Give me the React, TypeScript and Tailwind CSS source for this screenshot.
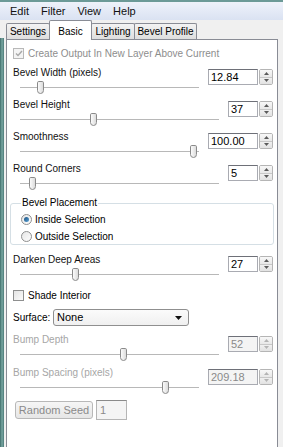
import React from 'react';

type Ctl = {
  label: string;
  value: string;
  wide?: boolean;
  pos: number;
  disabled?: boolean;
};

const Spinner: React.FC<{ disabled?: boolean }> = ({ disabled }) => {
  const c = disabled ? '#b4b4b4' : '#5a5a5a';
  return (
    <div className="ml-[1px] w-[14px] flex flex-col border border-[#b5b5b5] rounded-[2px] overflow-hidden">
      <div className="flex-1 flex items-center justify-center bg-gradient-to-b from-[#f8f8f8] to-[#e8e8e8] border-b border-[#c8c8c8]">
        <svg width="5" height="3" viewBox="0 0 5 3"><path d="M0 3 L2.5 0 L5 3 Z" fill={c} /></svg>
      </div>
      <div className="flex-1 flex items-center justify-center bg-gradient-to-b from-[#f0f0f0] to-[#e2e2e2]">
        <svg width="5" height="3" viewBox="0 0 5 3"><path d="M0 0 L2.5 3 L5 0 Z" fill={c} /></svg>
      </div>
    </div>
  );
};

const Slider: React.FC<{ pos: number }> = ({ pos }) => (
  <div className="relative mt-[2px] ml-[7px] h-[14px]">
    <div className="absolute inset-x-0 top-[6px] h-[2px] border-t border-[#b8b8b8] border-b border-b-white" />
    <div
      className="absolute top-0 w-[7px] h-[13px] rounded-b-[4px] rounded-t-[2px] border border-[#8a8a8a] bg-gradient-to-r from-[#fbfbfb] to-[#dcdcdc]"
      style={{ left: pos - 3 }}
    />
  </div>
);

const Control: React.FC<Ctl> = ({ label, value, wide, pos, disabled }) => (
  <div className="flex h-[28px]">
    <div className="flex-1 flex flex-col">
      <div className={`h-[12px] leading-[12px] ${disabled ? 'text-[#a6a6a6]' : 'text-[#111]'}`}>{label}</div>
      <Slider pos={pos} />
    </div>
    <div className="flex mt-[2px] h-[16px] ml-[9px]">
      <div
        className={`${wide ? 'w-[50px]' : 'w-[30px]'} border border-[#a9abb2] border-t-[#6e7078] pl-[2px] text-[11px] leading-[14px] ${
          disabled ? 'bg-[#f4f4f4] text-[#8a8a8a]' : 'bg-white text-black'
        }`}
      >
        {value}
      </div>
      <Spinner disabled={disabled} />
    </div>
  </div>
);

const Radio: React.FC<{ on?: boolean; label: string }> = ({ on, label }) => (
  <div className="flex items-center h-[14px] gap-[3px]">
    <div className="w-[11px] h-[11px] rounded-full border border-[#8e8f8f] bg-gradient-to-br from-[#e6e6e6] to-[#fdfdfd] flex items-center justify-center">
      {on && <div className="w-[5px] h-[5px] rounded-full bg-gradient-to-br from-[#1a4f7e] to-[#5aa4d8]" />}
    </div>
    <span>{label}</span>
  </div>
);

const CheckBox: React.FC<{ checked?: boolean; disabled?: boolean }> = ({ checked, disabled }) => (
  <div
    className={`w-[11px] h-[11px] border flex items-center justify-center ${
      disabled ? 'border-[#b8b8b8] bg-[#f4f4f4]' : 'border-[#8e8f8f] bg-gradient-to-br from-[#e4e4e4] to-[#fbfbfb]'
    }`}
  >
    {checked && (
      <svg width="8" height="7" viewBox="0 0 8 7">
        <path d="M1 3.5 L3 5.5 L7 1" stroke="#a8a8a8" strokeWidth="1.4" fill="none" />
      </svg>
    )}
  </div>
);

const App: React.FC = () => {
  const top: Ctl[] = [
    { label: 'Bevel Width (pixels)', value: '12.84', wide: true, pos: 20 },
    { label: 'Bevel Height', value: '37', pos: 73 },
    { label: 'Smoothness', value: '100.00', wide: true, pos: 173 },
    { label: 'Round Corners', value: '5', pos: 12 },
  ];

  return (
    <div className="w-[283px] h-[447px] bg-[#f0f0f0] flex flex-col overflow-hidden font-['Liberation_Sans',Arial,sans-serif] text-[10px] text-black">
      {/* menu */}
      <div className="h-[20px] shrink-0 border-t-2 border-[#6c9a97] bg-gradient-to-b from-[#eef2fa] to-[#dae2f2] flex items-center pl-[10px] gap-[12px] text-[11px] text-[#111]">
        <span>Edit</span>
        <span>Filter</span>
        <span>View</span>
        <span>Help</span>
      </div>

      <div className="flex-1 flex min-h-0">
        <div className="w-[4px] shrink-0 mt-[18px] bg-gradient-to-r from-[#3e6c69] via-[#79a7a3] to-[#4b7a77]" />
        <div className="flex-1 flex flex-col pl-[2px] pr-[5px]">
          {/* tabs */}
          <div className="h-[19px] shrink-0 flex items-end">
            <div className="w-[44px] h-[16px] border border-b-0 border-[#898c95] rounded-t-[2px] bg-gradient-to-b from-[#f3f3f3] to-[#dedede] flex items-center justify-center">Settings</div>
            <div className="relative z-10 -ml-[1px] -mb-[1px] w-[43px] h-[20px] border border-b-0 border-[#898c95] rounded-t-[2px] bg-white flex items-start pt-[3px] justify-center">Basic</div>
            <div className="-ml-[1px] w-[44px] h-[16px] border border-b-0 border-[#898c95] rounded-t-[2px] bg-gradient-to-b from-[#f3f3f3] to-[#dedede] flex items-center justify-center">Lighting</div>
            <div className="-ml-[1px] w-[63px] h-[16px] border border-b-0 border-[#898c95] rounded-t-[2px] bg-gradient-to-b from-[#f3f3f3] to-[#dedede] flex items-center justify-center">Bevel Profile</div>
          </div>

          {/* panel */}
          <div className="flex-1 bg-white border border-b-0 border-[#898c95] pl-[6px] pr-[4px] pt-[7px] flex flex-col">
            <div className="flex items-center h-[12px] gap-[4px] text-[#8d8d8d]">
              <CheckBox checked disabled />
              <span>Create Output In New Layer Above Current</span>
            </div>

            <div className="mt-[8px] flex flex-col gap-[4px]">
              {top.map((c) => (
                <Control key={c.label} {...c} />
              ))}
            </div>

            <fieldset className="mt-[6px] -ml-[3px] -mr-[1px] border border-[#d5dfe5] rounded-[3px] px-[10px] pt-[3px] pb-[1px] flex flex-col gap-[3px]">
              <legend className="px-[1px] h-[12px] leading-[12px]">Bevel Placement</legend>
              <Radio on label="Inside Selection" />
              <Radio label="Outside Selection" />
            </fieldset>

            <div className="mt-[9px]">
              <Control label="Darken Deep Areas" value="27" pos={55} />
            </div>

            <div className="mt-[7px] flex items-center h-[12px] gap-[4px]">
              <CheckBox />
              <span>Shade Interior</span>
            </div>

            <div className="mt-[8px] flex items-center h-[17px]">
              <span className="w-[40px]">Surface:</span>
              <div className="w-[136px] h-[17px] border border-[#8f8f8f] rounded-[3px] bg-gradient-to-b from-[#fbfbfb] to-[#f0f0f0] flex items-center pl-[3px] pr-[6px] text-[11px]">
                <span className="flex-1">None</span>
                <svg width="7" height="4" viewBox="0 0 7 4"><path d="M0 0 L3.5 4 L7 0 Z" fill="#111" /></svg>
              </div>
            </div>

            <div className="mt-[8px]">
              <Control label="Bump Depth" value="52" pos={103} disabled />
            </div>
            <div className="mt-[5px]">
              <Control label="Bump Spacing (pixels)" value="209.18" wide pos={145} disabled />
            </div>

            <div className="mt-[5px] flex items-center">
              <div className="ml-[2px] w-[78px] h-[18px] border border-[#b8b8b8] rounded-[3px] bg-gradient-to-b from-[#f6f6f6] to-[#e6e6e6] flex items-center justify-center text-[#8a8a8a] text-[11px]">
                Random Seed
              </div>
              <div className="ml-[3px] w-[31px] h-[20px] border border-[#b5b5b5] border-t-[#8a8a8a] bg-[#f4f4f4] pl-[3px] leading-[18px] text-[11px] text-[#8a8a8a]">
                1
              </div>
            </div>
          </div>
        </div>
      </div>
    </div>
  );
};

export default App;
